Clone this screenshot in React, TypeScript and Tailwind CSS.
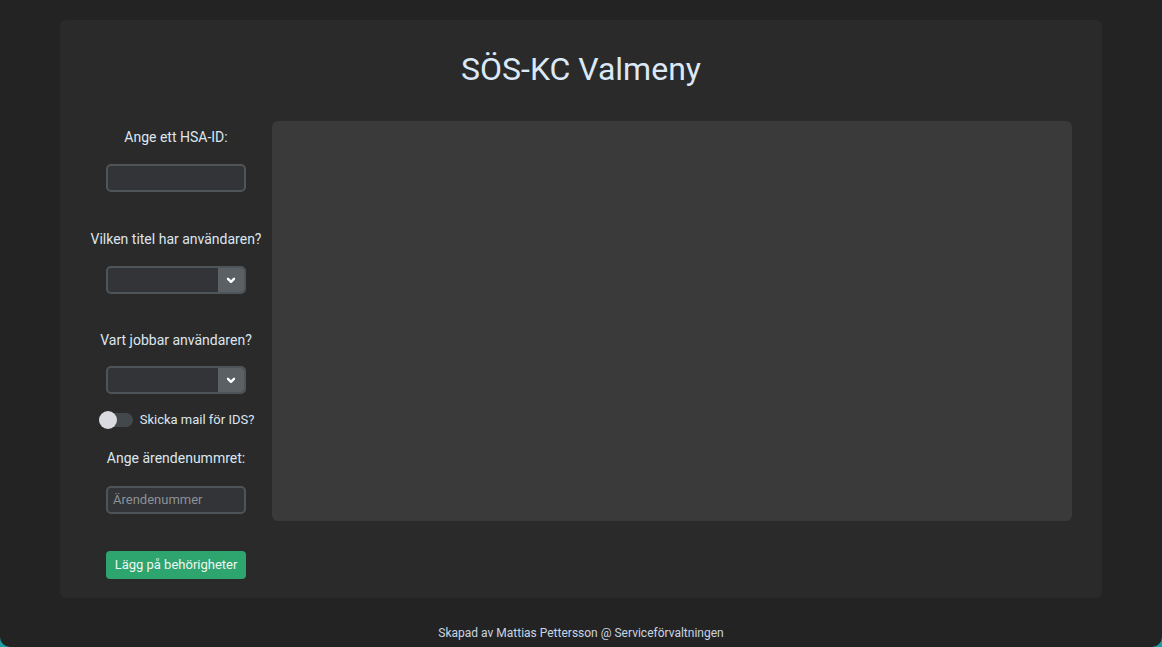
import React from "react";

function Select() {
  return (
    <div className="flex h-[28px] w-[140px] overflow-hidden rounded-[5px] border-2 border-[#4f5458] bg-[#323437]">
      <div className="flex-1" />
      <div className="flex w-[26px] items-center justify-center bg-[#5a6064]">
        <svg width="10" height="7" viewBox="0 0 10 7">
          <path d="M2 1.8 L5 4.8 L8 1.8" stroke="#ffffff" strokeWidth="2.4" fill="none" strokeLinecap="round" strokeLinejoin="round" />
        </svg>
      </div>
    </div>
  );
}

export default function App() {
  return (
    <div className="h-[647px] w-[1162px] bg-[#1a9ea4]" style={{ fontFamily: "Roboto, 'Liberation Sans', sans-serif" }}>
      <div className="flex h-full w-full flex-col items-center rounded-b-[10px] bg-[#232323] pt-[20px]">
        <div className="flex h-[578px] w-[1042px] flex-col rounded-[6px] bg-[#2a2a2a]">
          <h1 className="mt-[30px] text-center text-[32px] leading-[38px] text-[#dbe8f6]">SÖS-KC Valmeny</h1>
          <div className="mt-[33px] flex pl-[20px]">
            <div className="flex w-[192px] flex-col items-center text-[14px] text-[#dce6f0]">
              <div className="mt-[7px] leading-[18px]">Ange ett HSA-ID:</div>
              <div className="mt-[18px] h-[28px] w-[140px] rounded-[5px] border-2 border-[#4f5458] bg-[#323437]" />
              <div className="mt-[38px] whitespace-nowrap leading-[18px]">Vilken titel har användaren?</div>
              <div className="mt-[18px]"><Select /></div>
              <div className="mt-[37px] leading-[18px]">Vart jobbar användaren?</div>
              <div className="mt-[17px]"><Select /></div>
              <div className="mt-[18px] flex items-center gap-[7px] pl-[1px]">
                <div className="relative h-[14px] w-[34px] rounded-full bg-[#43484c]">
                  <div className="absolute left-0 top-[-2px] h-[18px] w-[18px] rounded-full bg-[#d9dbe0]" />
                </div>
                <span className="text-[13px] leading-[16px]">Skicka mail för IDS?</span>
              </div>
              <div className="mt-[21px] leading-[18px]">Ange ärendenummret:</div>
              <div className="mt-[19px] flex h-[28px] w-[140px] items-center rounded-[5px] border-2 border-[#4f5458] bg-[#323437] px-[5px] text-[13px] text-[#8c9196]">
                Ärendenummer
              </div>
              <div className="mt-[37px] flex h-[28px] w-[140px] items-center justify-center rounded-[4px] bg-[#2ea46f] text-[13px] text-[#eef6f1]">
                Lägg på behörigheter
              </div>
            </div>
            <div className="h-[400px] w-[800px] rounded-[6px] bg-[#3a3a3a]" />
          </div>
        </div>
        <div className="mt-[28px] text-[12px] leading-[14px] text-[#c9d5e2]">
          Skapad av Mattias Pettersson @ Serviceförvaltningen
        </div>
      </div>
    </div>
  );
}
